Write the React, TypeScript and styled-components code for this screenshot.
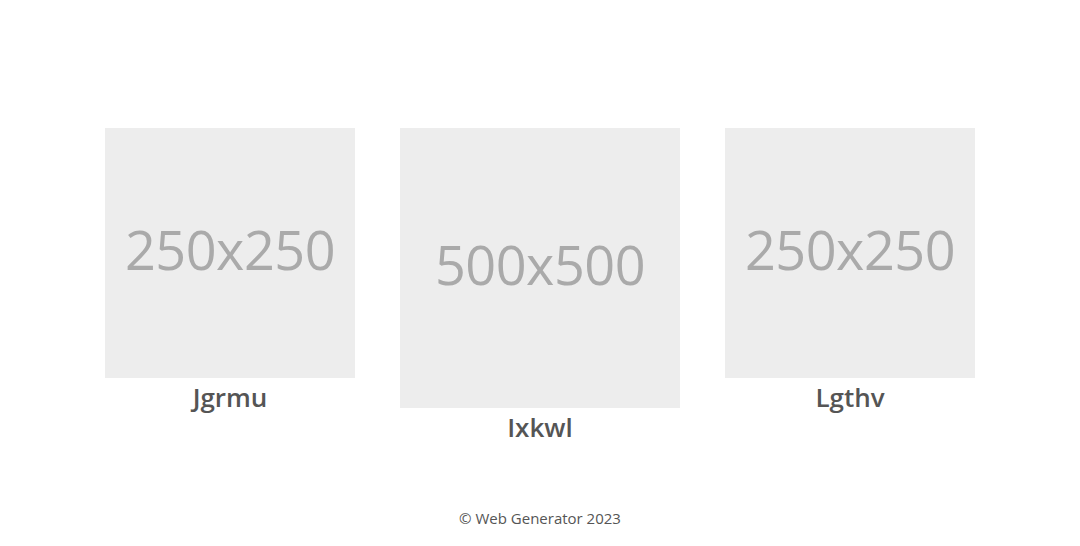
import React from "react";
import styled, { createGlobalStyle } from "styled-components";

const GlobalStyle = createGlobalStyle`
  html, body { margin: 0; padding: 0; background: #ffffff; }
  body { font-family: "Open Sans", "Noto Sans", "Liberation Sans", sans-serif; }
`;

const Page = styled.div`
  min-height: 546px;
  display: flex;
  flex-direction: column;
`;

const Main = styled.main`
  flex: 1;
  display: flex;
  justify-content: center;
  align-items: flex-start;
  gap: 45px;
  padding-top: 128px;
`;

const Card = styled.div`
  display: flex;
  flex-direction: column;
  align-items: center;
`;

const Placeholder = styled.div<{ $size: number }>`
  box-sizing: border-box;
  width: ${(p) => p.$size}px;
  height: ${(p) => p.$size}px;
  padding-bottom: 9px;
  background: #ededed;
  color: #aaaaaa;
  display: flex;
  align-items: center;
  justify-content: center;
  font-size: 54px;
  letter-spacing: -0.5px;
`;

const Label = styled.h3`
  margin: 0;
  font-size: 26px;
  font-weight: 600;
  line-height: 38px;
  color: #555555;
`;

const Footer = styled.footer`
  padding: 18px 0;
  text-align: center;
  font-size: 15px;
  line-height: 20px;
  color: #555555;
`;

const items = [
  { size: 250, name: "Jgrmu" },
  { size: 280, name: "Ixkwl", text: "500x500" },
  { size: 250, name: "Lgthv" },
];

export default function App() {
  return (
    <>
      <GlobalStyle />
      <Page>
        <Main>
          {items.map((it) => (
            <Card key={it.name}>
              <Placeholder $size={it.size}>{it.text ?? "250x250"}</Placeholder>
              <Label>{it.name}</Label>
            </Card>
          ))}
        </Main>
        <Footer>© Web Generator 2023</Footer>
      </Page>
    </>
  );
}
